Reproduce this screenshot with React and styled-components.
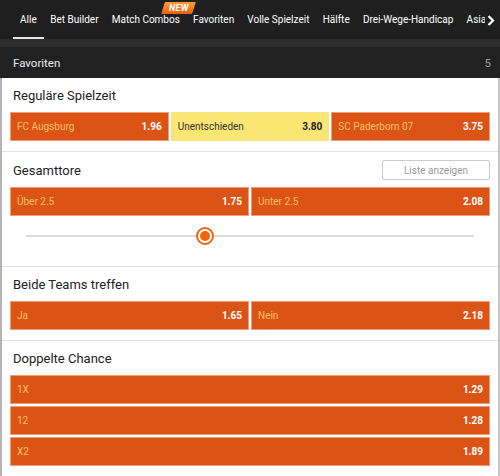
import React from 'react'
import styled, { createGlobalStyle } from 'styled-components'

const GlobalStyle = createGlobalStyle`
  body {
    margin: 0;
    background: #fff;
    font-family: Roboto, "Liberation Sans", Arial, sans-serif;
  }
`;

const Page = styled.div`
  width: 500px;
  height: 476px;
  overflow: hidden;
  background: #fff;
`;

const TabBar = styled.div`
  display: flex;
  height: 39px;
  padding-left: 13px;
  background: #1f1f1f;
`;

const TabList = styled.div`
  flex: 1;
  min-width: 0;
  display: flex;
  white-space: nowrap;
  overflow: hidden;
`;

const Tab = styled.div`
  position: relative;
  flex-shrink: 0;
  display: flex;
  align-items: center;
  padding: 2px 6.6px 0;
  font-size: 10px;
  color: #fff;
  border-bottom: 2px solid ${p => (p.$active ? '#e6e6e6' : 'transparent')};
  &:first-child {
    padding: 2px 7px 0;
  }
`;

const NewBadge = styled.span`
  position: absolute;
  top: 2px;
  right: -8px;
  width: 31px;
  height: 12px;
  display: flex;
  align-items: center;
  justify-content: center;
  background: linear-gradient(180deg, #ff9a3d 0%, #e8610f 100%);
  transform: skewX(-18deg);
  border-radius: 1px;
  font-size: 9px;
  font-weight: 700;
  font-style: italic;
  letter-spacing: 0.3px;
  color: #fff;
`;

const MoreArrow = styled.div`
  flex-shrink: 0;
  width: 15px;
  display: flex;
  align-items: center;
  padding: 1px 0 0 2px;
  box-sizing: border-box;
`;

const Band = styled.div`
  height: 8px;
  background: #2d2d2d;
`;

const FavHeader = styled.div`
  height: 31px;
  display: flex;
  align-items: center;
  justify-content: space-between;
  padding: 0 9px 0 13px;
  background: #212121;
  font-size: 11.5px;
  color: #ececec;
`;

const Count = styled.span`
  color: #9c9c9c;
`;

const Content = styled.div`
  border-left: 2px solid #b4b4b4;
  border-right: 2px solid #c4c4c4;
`;

const Section = styled.div`
  padding: 0 8px 10px;
  border-bottom: ${p => (p.$last ? 'none' : '1px solid #e2e2e2')};
`;

const Heading = styled.div`
  box-sizing: border-box;
  height: ${p => p.$h || 34}px;
  display: flex;
  align-items: center;
  justify-content: space-between;
  padding: 1px 0 0 3px;
  font-size: 13px;
  color: #222;
`;

const ListButton = styled.div`
  width: 106px;
  height: 18px;
  display: flex;
  align-items: center;
  justify-content: center;
  border: 1px solid #cbcbcb;
  border-radius: 2px;
  font-size: 10px;
  color: #9a9a9a;
`;

const Row = styled.div`
  display: grid;
  grid-template-columns: repeat(${p => p.$cols}, 1fr);
  gap: 2px;
`;

const Stack = styled.div`
  display: flex;
  flex-direction: column;
  gap: 2px;
`;

const Odd = styled.div`
  box-sizing: border-box;
  height: 29px;
  display: flex;
  align-items: center;
  justify-content: space-between;
  padding: 0 6px;
  background: ${p => (p.$draw ? '#fbe673' : '#dc5316')};
  border: 1px solid ${p => (p.$draw ? '#f7e38a' : '#ef9c78')};
  font-size: 10px;
`;

const Label = styled.span`
  color: ${p => (p.$draw ? '#333' : '#fdc064')};
`;

const Price = styled.span`
  font-weight: 700;
  color: ${p => (p.$draw ? '#222' : '#fff')};
`;

const SliderArea = styled.div`
  height: 40px;
  display: flex;
  align-items: center;
  padding: 0 16px;
`;

const Track = styled.div`
  position: relative;
  flex: 1;
  height: 2px;
  background: #dadada;
`;

const Thumb = styled.div`
  position: absolute;
  top: 50%;
  box-sizing: border-box;
  width: 18px;
  height: 18px;
  border-radius: 50%;
  border: 2px solid #f0640e;
  background: #fff;
  transform: translate(-50%, -50%);
  display: flex;
  align-items: center;
  justify-content: center;

  &::after {
    content: '';
    width: 10px;
    height: 10px;
    border-radius: 50%;
    background: #f0640e;
  }
`;

const tabs = ['Alle', 'Bet Builder', 'Match Combos', 'Favoriten', 'Volle Spielzeit', 'Hälfte', 'Drei-Wege-Handicap', 'Asian Handicap']

function OddButton({ label, price, draw }) {
  return (
    <Odd $draw={draw}>
      <Label $draw={draw}>{label}</Label>
      <Price $draw={draw}>{price}</Price>
    </Odd>
  )
}

export default function App() {
  return (
    <Page>
      <GlobalStyle />
      <TabBar>
        <TabList>
          {tabs.map((t, i) => (
            <Tab key={t} $active={i === 0}>
              {t}
              {t === 'Match Combos' && <NewBadge><span style={{ transform: 'skewX(18deg)' }}>NEW</span></NewBadge>}
            </Tab>
          ))}
        </TabList>
        <MoreArrow>
          <svg width="8" height="11" viewBox="0 0 8 11">
            <path d="M1.5 1 L6 5.5 L1.5 10" fill="none" stroke="#fff" strokeWidth="2.2" />
          </svg>
        </MoreArrow>
      </TabBar>
      <Band />
      <FavHeader>
        <span>Favoriten</span>
        <Count>5</Count>
      </FavHeader>
      <Content>
        <Section>
          <Heading>Reguläre Spielzeit</Heading>
          <Row $cols={3}>
            <OddButton label="FC Augsburg" price="1.96" />
            <OddButton label="Unentschieden" price="3.80" draw />
            <OddButton label="SC Paderborn 07" price="3.75" />
          </Row>
        </Section>
        <Section>
          <Heading $h={35}>
            Gesamttore
            <ListButton>Liste anzeigen</ListButton>
          </Heading>
          <Row $cols={2}>
            <OddButton label="Über 2.5" price="1.75" />
            <OddButton label="Unter 2.5" price="2.08" />
          </Row>
          <SliderArea>
            <Track>
              <Thumb style={{ left: '40%' }} />
            </Track>
          </SliderArea>
        </Section>
        <Section>
          <Heading>Beide Teams treffen</Heading>
          <Row $cols={2}>
            <OddButton label="Ja" price="1.65" />
            <OddButton label="Nein" price="2.18" />
          </Row>
        </Section>
        <Section $last>
          <Heading>Doppelte Chance</Heading>
          <Stack>
            <OddButton label="1X" price="1.29" />
            <OddButton label="12" price="1.28" />
            <OddButton label="X2" price="1.89" />
          </Stack>
        </Section>
      </Content>
    </Page>
  )
}
